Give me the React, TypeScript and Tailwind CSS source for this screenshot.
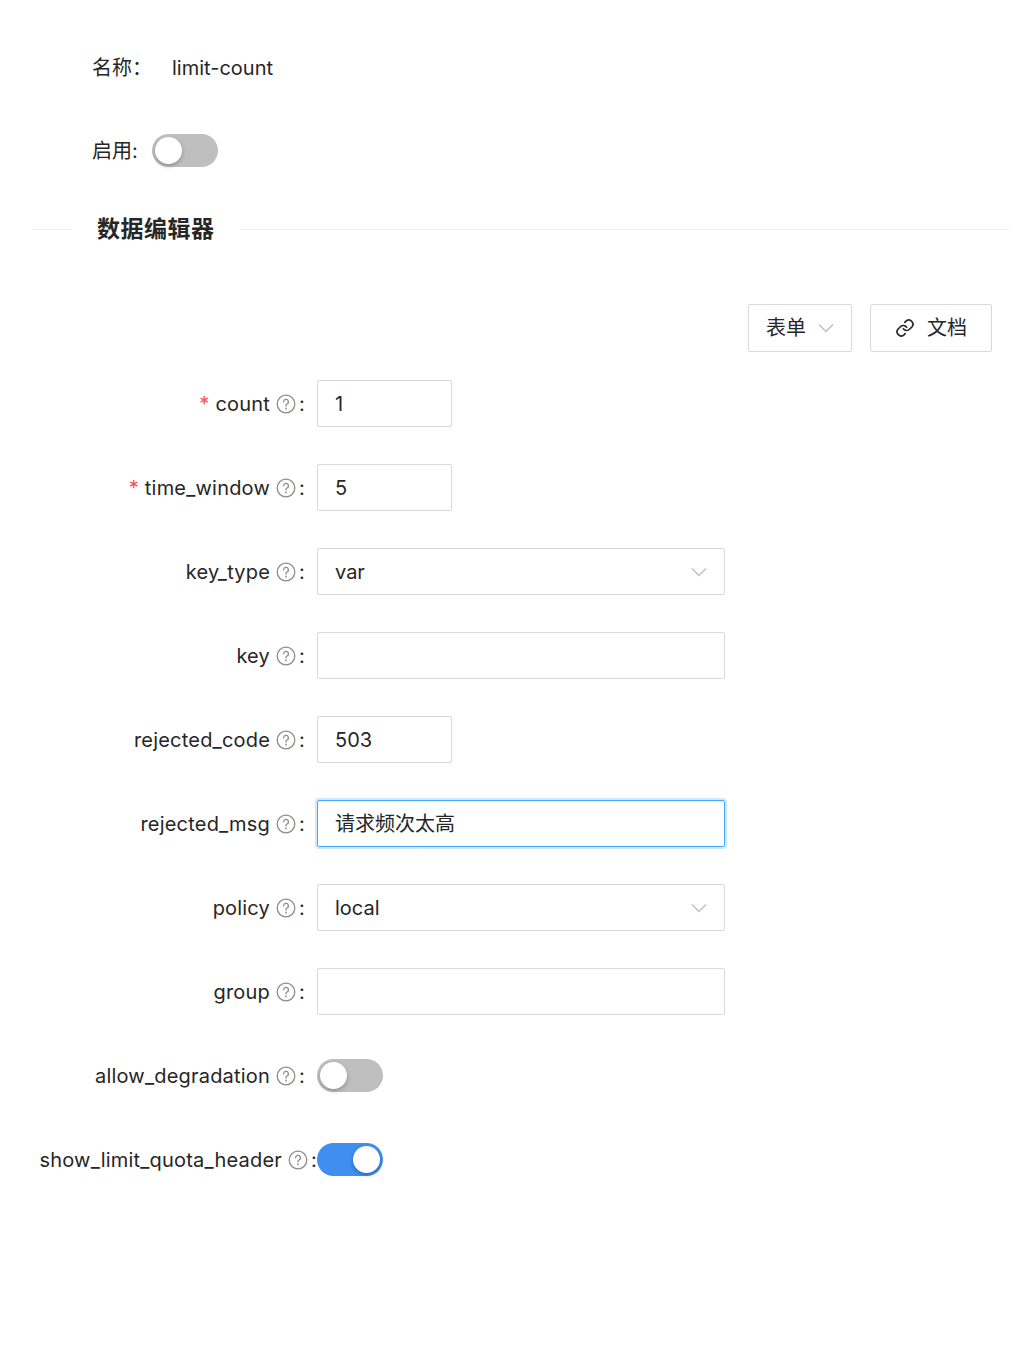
import React from "react";

const F = { fontFamily: '"Inter","Noto Sans CJK SC",sans-serif' };

function Q() {
  return (
    <svg width="20" height="20" viewBox="0 0 20 20" className="ml-[6px] mr-[3px]">
      <circle cx="10" cy="10" r="8.8" fill="none" stroke="#8c8c8c" strokeWidth="1.3" />
      <path d="M7.6 7.8a2.4 2.4 0 1 1 3.4 2.2c-.7.3-1 .8-1 1.5v.6" fill="none" stroke="#8c8c8c" strokeWidth="1.3" strokeLinecap="round" />
      <circle cx="10" cy="14.4" r="0.9" fill="#8c8c8c" />
    </svg>
  );
}

function Chevron() {
  return (
    <svg width="16" height="10" viewBox="0 0 16 10">
      <path d="M1 1.5l7 7 7-7" fill="none" stroke="#bfbfbf" strokeWidth="1.4" />
    </svg>
  );
}

function Toggle({ on }: { on?: boolean }) {
  return (
    <div className={`w-[66px] h-[33px] rounded-full relative ${on ? "bg-[#3f8ef0]" : "bg-[#bfbfbf]"}`}>
      <div className={`absolute top-[3px] w-[27px] h-[27px] rounded-full bg-white shadow-[0_2px_4px_rgba(0,0,0,0.25)] ${on ? "left-[36px]" : "left-[3px]"}`} />
    </div>
  );
}

function Row({ label, req, tight, children }: { label: string; req?: boolean; tight?: boolean; children: React.ReactNode }) {
  return (
    <div className="flex items-center h-[84px]">
      <div className="w-[317px] shrink-0 flex justify-end items-center whitespace-nowrap text-[20px] text-[#262626] tracking-[0.2px]">
        {req && <span className="text-[#ff4d4f] mr-[6px]">*</span>}
        <span>{label}</span>
        <Q />
        <span className={tight ? "mr-0" : "mr-[12px]"}>:</span>
      </div>
      {children}
    </div>
  );
}

function Input({ w, v, focus, select }: { w: number; v?: string; focus?: boolean; select?: boolean }) {
  return (
    <div
      style={{ width: w }}
      className={`h-[47px] border rounded-[2px] flex items-center justify-between px-[17px] text-[20px] text-[#262626] ${focus ? "border-[#40a9ff] shadow-[0_0_0_2px_rgba(24,144,255,0.2)]" : "border-[#d9d9d9]"}`}
    >
      <span>{v}</span>
      {select && <Chevron />}
    </div>
  );
}

export default function App() {
  return (
    <div style={F} className="w-[1034px] h-[1358px] bg-white text-[#262626] relative">
      <div className="pt-[50px] pl-[92px] flex items-center h-[35px] box-content text-[20px]">
        <span>名称：</span>
        <span className="ml-[20px]">limit-count</span>
      </div>
      <div className="mt-[49px] pl-[92px] flex items-center h-[33px] text-[20px]">
        <span className="mr-[14px]">启用:</span>
        <Toggle />
      </div>
      <div className="mt-[45px] flex items-center pl-[32px] pr-[24px]">
        <div className="w-[40px] h-px bg-[#f0f0f0]" />
        <span className="px-[25px] text-[23px] font-bold tracking-[0.5px]">数据编辑器</span>
        <div className="flex-1 h-px bg-[#f0f0f0]" />
      </div>
      <div className="mt-[57px] flex justify-end pr-[42px] gap-[18px]">
        <div className="w-[104px] h-[48px] border border-[#d9d9d9] rounded-[2px] flex items-center justify-center gap-[12px] text-[20px]">
          <span>表单</span>
          <Chevron />
        </div>
        <div className="w-[122px] h-[48px] border border-[#d9d9d9] rounded-[2px] flex items-center justify-center gap-[12px] text-[20px]">
          <svg width="20" height="20" viewBox="0 0 24 24" fill="none" stroke="#262626" strokeWidth="2" strokeLinecap="round">
            <path d="M10 13a5 5 0 0 0 7.5.5l3-3a5 5 0 0 0-7-7l-1.7 1.7" />
            <path d="M14 11a5 5 0 0 0-7.5-.5l-3 3a5 5 0 0 0 7 7l1.7-1.7" />
          </svg>
          <span>文档</span>
        </div>
      </div>
      <div className="mt-[10px]">
        <Row label="count" req><Input w={135} v="1" /></Row>
        <Row label="time_window" req><Input w={135} v="5" /></Row>
        <Row label="key_type"><Input w={408} v="var" select /></Row>
        <Row label="key"><Input w={408} /></Row>
        <Row label="rejected_code"><Input w={135} v="503" /></Row>
        <Row label="rejected_msg"><Input w={408} v="请求频次太高" focus /></Row>
        <Row label="policy"><Input w={408} v="local" select /></Row>
        <Row label="group"><Input w={408} /></Row>
        <Row label="allow_degradation"><Toggle /></Row>
        <Row label="show_limit_quota_header" tight><Toggle on /></Row>
      </div>
    </div>
  );
}
